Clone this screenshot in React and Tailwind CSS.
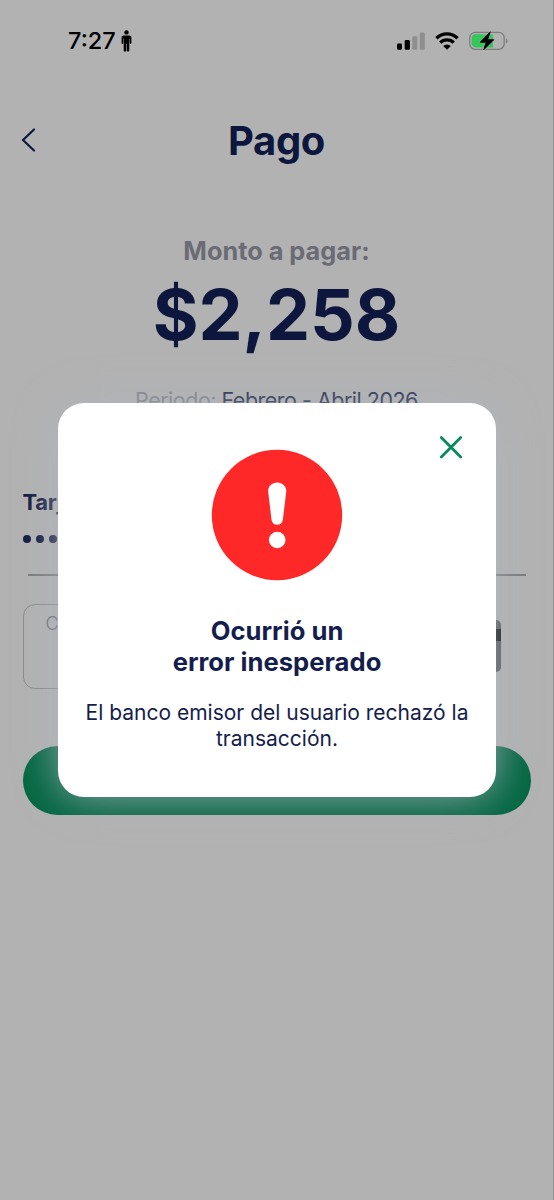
import React from 'react';

const SignalIcon = () => (
  <svg className="w-7 h-[18px]" viewBox="0 0 28 18" aria-hidden="true">
    <rect x="0" y="11.5" width="5" height="6.3" rx="1.3" fill="#000" />
    <rect x="7.7" y="8" width="5.2" height="9.8" rx="1.3" fill="#000" />
    <rect x="15.3" y="4.3" width="5" height="13.5" rx="1.3" fill="#8e8e8e" />
    <rect x="22.8" y="0.6" width="5" height="17.2" rx="1.3" fill="#8e8e8e" />
  </svg>
);

const WifiIcon = () => (
  <svg className="w-6 h-[18px]" viewBox="0 0 24 18" aria-hidden="true">
    <g fill="none" stroke="#000" strokeWidth="3.4">
      <path d="M1.4 6.2a15.2 15.2 0 0 1 21.2 0" />
      <path d="M5.3 10.6a9.6 9.6 0 0 1 13.4 0" />
    </g>
    <path d="M12 17.8 8.2 14.1a5.5 5.5 0 0 1 7.6 0z" fill="#000" />
  </svg>
);

const BatteryIcon = () => (
  <svg className="w-10 h-5" viewBox="0 0 40 20" aria-hidden="true">
    <rect x="0.8" y="1.3" width="34.4" height="17" rx="5.5" fill="none" stroke="#7c7c7c" strokeWidth="1.3" />
    <path d="M6.5 3.2H24v13.2H6.5a3.8 3.8 0 0 1-3.8-3.8V7a3.8 3.8 0 0 1 3.8-3.8z" fill="#35c759" />
    <path d="M37 7.4c2 .8 2 4 0 4.8z" fill="#7c7c7c" />
    <path d="M21.3.8 11.2 11.2h6L14.5 19 24.8 8.7h-6.2z" fill="#000" stroke="#b2b2b2" strokeWidth="1.6" strokeLinejoin="round" paintOrder="stroke" />
    <path d="M21.3.8 11.2 11.2h6L14.5 19 24.8 8.7h-6.2z" fill="#000" stroke="#000" strokeWidth="0.8" strokeLinejoin="round" />
  </svg>
);

const PersonIcon = () => (
  <svg className="w-[11px] h-[22px]" viewBox="0 0 11 22" aria-hidden="true">
    <circle cx="5.5" cy="2.4" r="2.2" />
    <path d="M2.6 5.4h5.8c1.3 0 2 .8 2 2v5.5c0 1.4-1.6 1.4-1.6 0V8.5h-.5V20.6c0 1.5-2.5 1.5-2.5 0V14h-.6v6.6c0 1.5-2.5 1.5-2.5 0V8.5h-.5v4.4c0 1.4-1.6 1.4-1.6 0V7.4c0-1.2.7-2 2-2z" />
  </svg>
);

const StatusBar = () => (
  <div className="flex h-[82px] items-center justify-between pl-[68px] pr-[44px]">
    <div className="flex items-center gap-[5px]">
      <span className="text-[23.5px] font-medium leading-none text-black">7:27</span>
      <PersonIcon />
    </div>
    <div className="flex items-center">
      <SignalIcon />
      <div className="ml-[10px]"><WifiIcon /></div>
      <div className="ml-[10px]"><BatteryIcon /></div>
    </div>
  </div>
);

const PaymentScreen = () => (
  <div className="flex h-full flex-col border-r border-[#8d8d8f] text-[#0d173d]">
    <StatusBar />

    <header className="grid h-[118px] grid-cols-[1fr_auto_1fr] items-center">
      <button type="button" className="-mt-[2px] ml-[20px] w-4" aria-label="Volver">
        <svg className="h-6 w-4" viewBox="0 0 16 24" fill="none" stroke="currentColor" strokeWidth="2.2" strokeLinecap="round" strokeLinejoin="round">
          <path d="M14 1.5 3 12l11 10.5" />
        </svg>
      </button>
      <h1 className="text-[40px] font-bold leading-none tracking-[-0.4px]">Pago</h1>
    </header>

    <section className="flex flex-col items-center pt-9">
      <p className="text-[25.3px] font-bold leading-[30px] text-[#6a6b75]">Monto a pagar:</p>
      <p className="mt-[7px] text-[70px] font-bold leading-[84px]">$2,258</p>
      <p className="mt-[28px] text-[21.5px] leading-[31px] tracking-[-0.5px]">
        <span className="text-[#7a7c86]">Periodo:</span> Febrero - Abril 2026
      </p>
    </section>

    <section className="mt-[71px] flex flex-col pl-[22.5px] pr-[22px]">
      <h2 className="text-[22px] font-bold leading-[30px] tracking-[-0.3px]">Tarjeta</h2>
      <div className="mt-[18px] flex gap-[5px]">
        {[0, 1, 2, 3].map((dot) => (
          <span key={dot} className="size-2 rounded-full bg-[#0d173d]" />
        ))}
      </div>
      <div className="mx-[5px] mt-[31px] h-[2px] bg-[#77787b]" />
      <div className="mt-7 flex items-start justify-between">
        <div className="h-[85px] w-[240px] rounded-[12px] border border-[#88898c] pl-[22px] pt-[5px] text-[18px] font-light text-[#66676c]">
          CVV
        </div>
        <div className="mr-[30px] mt-4 flex h-[52px] w-[80px] flex-col overflow-hidden rounded-[5px] bg-[#4c4d50]">
          <div className="mt-[9px] h-3 bg-black" />
        </div>
      </div>
      <button type="button" className="mt-[56.5px] h-[69.5px] rounded-full bg-[#006642]" aria-label="Pagar" />
    </section>
  </div>
);

const ErrorBadge = () => (
  <svg className="size-[132px]" viewBox="0 0 132 132" aria-hidden="true">
    <circle cx="66" cy="66" r="65.2" fill="#ff2828" />
    <path d="M57.2 43c-.5-5.4 3.5-9.5 9-9.5s9.500 4.100 9 9.500l-3.300 27.500c-.5 3.300-2.600 5.300-5.700 5.300s-5.200-2-5.700-5.300z" fill="#fff" />
    <circle cx="66.2" cy="91" r="8.3" fill="#fff" />
  </svg>
);

const ErrorDialog = () => (
  <div role="alertdialog" className="flex h-[394px] w-[438px] flex-col items-center rounded-[26px] bg-white text-center text-[#151d4d] shadow-[0_0_45px_rgba(178,181,189,0.85)]">
    <button type="button" className="mr-[33px] mt-[32px] self-end" aria-label="Cerrar">
      <svg className="size-6" viewBox="0 0 24 24" stroke="#078a5c" strokeWidth="2.8" strokeLinecap="round">
        <path d="M2.3 2.6 21.7 22M21.7 2.6 2.3 22" />
      </svg>
    </button>
    <div className="-mt-[10px]">
      <ErrorBadge />
    </div>
    <h2 className="mt-[35px] text-[25.6px] font-bold leading-[30.5px] tracking-[0.02px]">
      Ocurrió un
      <br />
      error inesperado
    </h2>
    <p className="mt-[23px] text-[21px] leading-[25.5px]">
      El banco emisor del usuario rechazó la
      <br />
      transacción.
    </p>
  </div>
);

export default function App() {
  return (
    <main className="relative h-[1200px] w-[554px] overflow-hidden bg-[#b2b2b2] font-['Inter',sans-serif]">
      <PaymentScreen />
      <div className="absolute inset-0 flex items-center justify-center">
        <ErrorDialog />
      </div>
    </main>
  );
}
